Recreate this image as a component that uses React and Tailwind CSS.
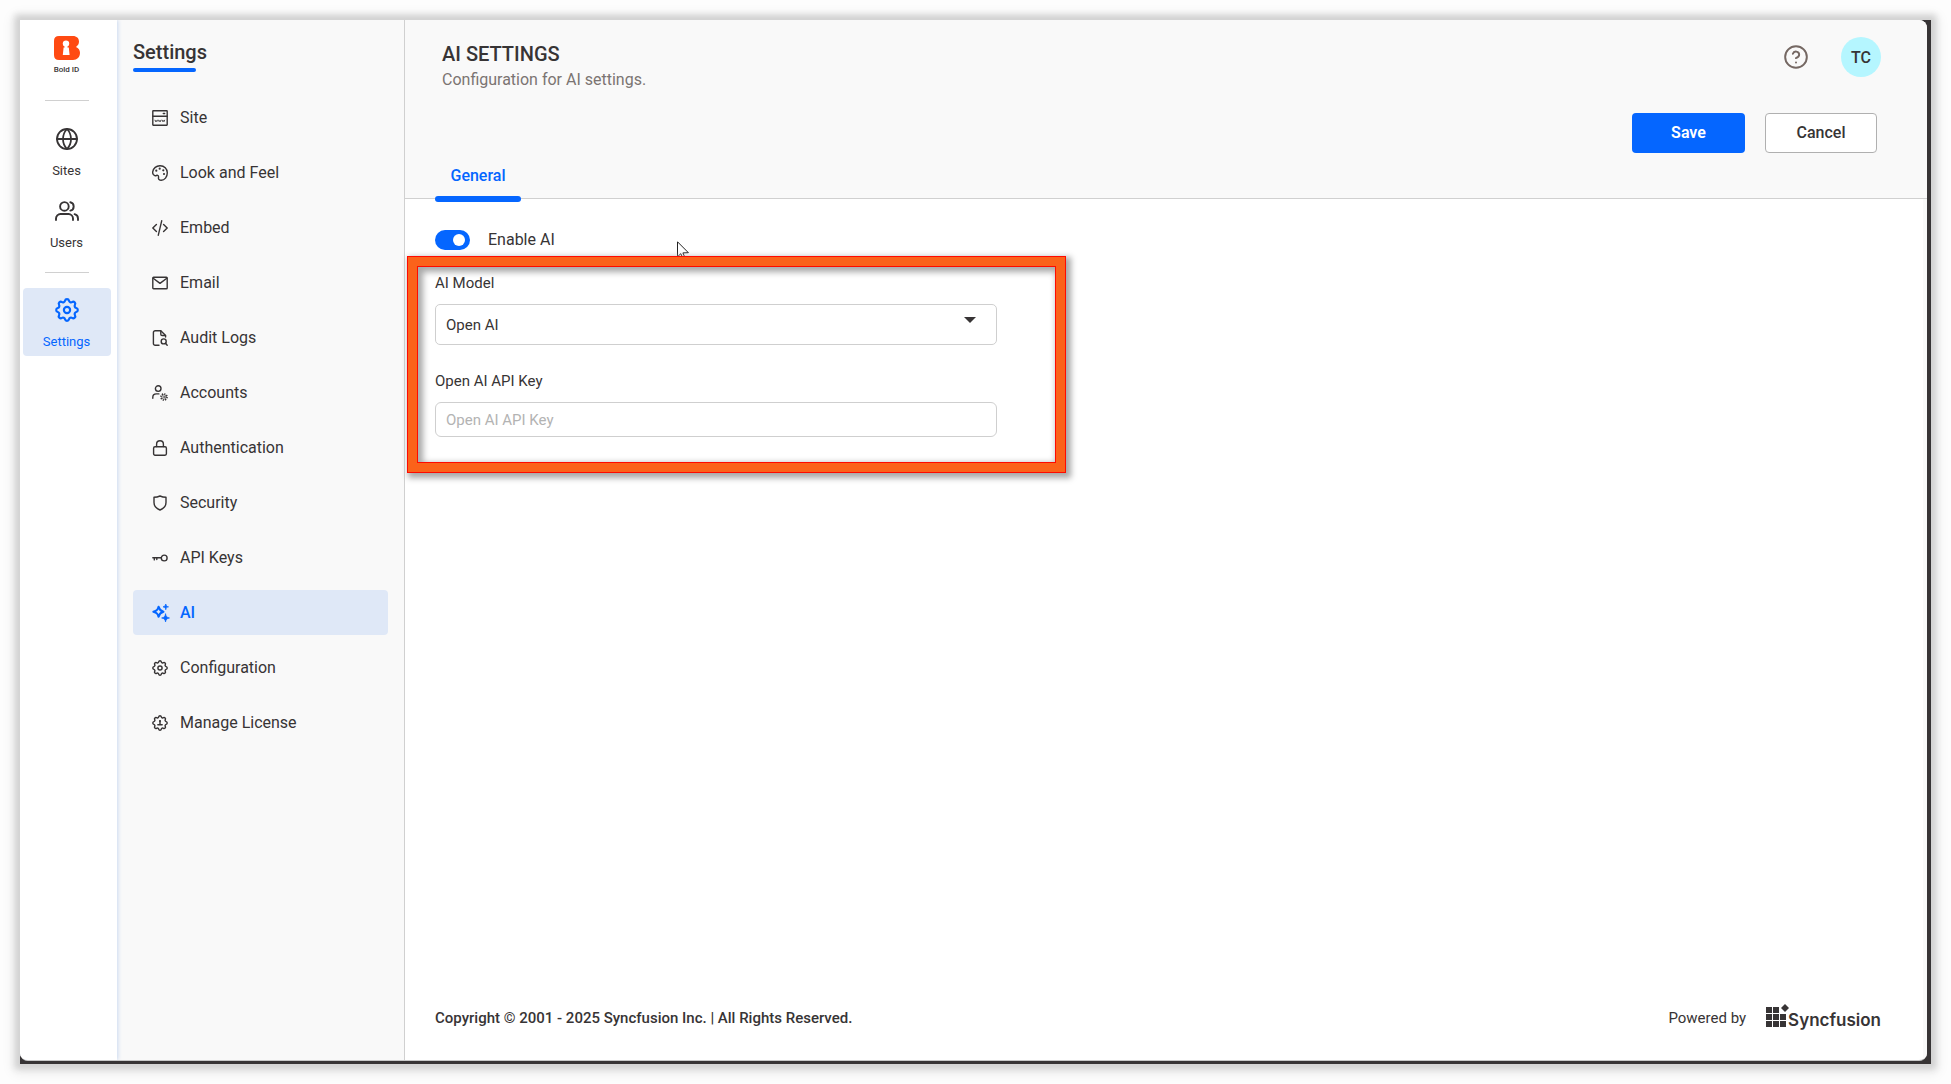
import { useState } from "react";
import { CircleHelp, Globe } from "lucide-react";

const GEAR_PATH =
  "M10.325 4.317c.426-1.756 2.924-1.756 3.35 0a1.724 1.724 0 0 0 2.573 1.066c1.543-.94 3.31.826 2.37 2.37a1.724 1.724 0 0 0 1.065 2.572c1.756.426 1.756 2.924 0 3.35a1.724 1.724 0 0 0-1.066 2.573c.94 1.543-.826 3.31-2.37 2.37a1.724 1.724 0 0 0-2.572 1.065c-.426 1.756-2.924 1.756-3.35 0a1.724 1.724 0 0 0-2.573-1.066c-1.543.94-3.31-.826-2.37-2.37a1.724 1.724 0 0 0-1.065-2.572c-1.756-.426-1.756-2.924 0-3.35a1.724 1.724 0 0 0 1.066-2.573c-.94-1.543.826-3.31 2.37-2.37a1.724 1.724 0 0 0 2.572-1.065Z";

const Icon = ({ children, className = "size-4", ...props }) => (
  <svg
    viewBox="0 0 16 16"
    fill="none"
    stroke="currentColor"
    strokeWidth="1.4"
    strokeLinecap="round"
    strokeLinejoin="round"
    className={`shrink-0 ${className}`}
    aria-hidden="true"
    {...props}
  >
    {children}
  </svg>
);

const GearIcon = ({ className, strokeWidth = 1.8, children }) => (
  <Icon className={className} viewBox="2 2 20 20" strokeWidth={strokeWidth}>
    <path d={GEAR_PATH} />
    {children || <circle cx="12" cy="12" r="2.6" />}
  </Icon>
);

const SiteIcon = () => (
  <Icon strokeLinejoin="miter">
    <rect x=".8" y=".8" width="14.4" height="14.4" rx=".4" />
    <path d="M.8 6.2h14.4" />
    <path d="M11.3 3.5h1.4" />
    <path d="m3 10.2.6 1.4.6-1 .6 1 .6-1.4m1.2 0 .6 1.4.6-1 .6 1 .6-1.4m1.2 0 .6 1.4.6-1 .6 1 .6-1.4" strokeWidth=".9" />
  </Icon>
);

const PaletteIcon = () => (
  <Icon>
    <path d="M.7 6.8C1.2 3.2 4.4.6 8.2.7c4 .1 7.1 3.2 7.1 7.1 0 4.3-2.7 7.500-6.100 7.500-1.900 0-3-1.100-2.700-2.600.2-1.100 0-2-.8-2.300-1-.4-1.500.5-2.600.3C1.400 10.400.5 8.700.7 6.800Z" />
    <g fill="currentColor" stroke="none">
      <circle cx="4.3" cy="5.7" r="1.1" />
      <circle cx="7.7" cy="3.7" r="1.1" />
      <circle cx="11.3" cy="5.3" r="1.1" />
      <circle cx="12" cy="9" r="1.1" />
    </g>
  </Icon>
);

const EmbedIcon = () => (
  <Icon>
    <path d="M4.4 4.4.8 8l3.6 3.6M11.6 4.4 15.2 8l-3.6 3.6M9.7.8 6.3 15.2" />
  </Icon>
);

const EmailIcon = () => (
  <Icon>
    <rect x=".8" y="2.3" width="14.4" height="11.4" rx=".8" />
    <path d="M1.2 3.2 8 8.4l6.800-5.200" />
  </Icon>
);

const AuditIcon = () => (
  <Icon>
    <path d="M7 15.3H3.2a1.8 1.8 0 0 1-1.800-1.800V2.500A1.800 1.800 0 0 1 3.200.7h5.600l4.800 4.800v1.600" />
    <path d="M8.8.9v3.300c0 .8.5 1.300 1.300 1.300h3.300" />
    <circle cx="11.7" cy="11.4" r="2.500" />
    <path d="m13.500 13.300 1.700 1.900" />
  </Icon>
);

const AccountsIcon = () => (
  <Icon>
    <circle cx="6.2" cy="3.6" r="2.8" />
    <path d="M.8 13.2v-.9c0-2 1.500-3.400 3.500-3.400h2.600" />
    <circle cx="12" cy="12" r="3.1" strokeDasharray="1.300 1.100" strokeWidth="1.5" strokeLinecap="butt" />
    <circle cx="12" cy="12" r="2.2" strokeWidth=".7" />
    <circle cx="12" cy="12" r=".7" strokeWidth=".6" />
  </Icon>
);

const LockIcon = () => (
  <Icon>
    <rect x="1.6" y="6.8" width="12.8" height="8.4" rx="1.4" />
    <path d="M4.6 6.6V4.2a3.4 3.4 0 0 1 6.8 0v2.4" />
  </Icon>
);

const ShieldIcon = () => (
  <Icon>
    <path d="M8 1c1.900.9 3.800 1.300 6 1.300v5.200c0 3.500-2.300 6-6 7.500-3.700-1.500-6-4-6-7.500V2.300C4.200 2.300 6.100 1.900 8 1Z" />
  </Icon>
);

const KeyIcon = () => (
  <Icon>
    <circle cx="12.2" cy="8" r="2.9" />
    <path d="M9.200 7.700H.8M2.300 7.900v2M4.800 7.900v1.600" />
  </Icon>
);

const SparkleIcon = () => (
  <Icon className="size-[18px]" viewBox="0 0 17 17">
    <path d="M6.200 2.600c.7 2.800 1.500 3.800 4.600 4.700-3.100.9-3.900 1.800-4.600 4.700-.7-2.900-1.500-3.800-4.900-4.700 3.400-.9 4.200-1.900 4.900-4.700Z" strokeWidth="2" />
    <path
      d="M13 0c.3 1.800.9 2.300 2.600 2.700-1.700.4-2.300.9-2.600 2.700-.3-1.800-.9-2.300-2.600-2.700C12.100 2.300 12.700 1.800 13 0ZM12.800 9.500c.5 2.400 1.200 3.200 3.700 3.700-2.500.5-3.200 1.300-3.700 3.700-.5-2.400-1.200-3.200-3.700-3.700 2.500-.5 3.200-1.300 3.700-3.700Z"
      fill="currentColor"
      strokeWidth=".7"
    />
  </Icon>
);

const LicenseIcon = () => (
  <GearIcon>
    <circle cx="12" cy="9.500" r="1.300" fill="currentColor" stroke="none" />
    <path d="M12 9.500v4.800M9.300 14.300h5.400" />
  </GearIcon>
);

const UsersIcon = () => (
  <Icon className="h-5 w-6" viewBox="0 0 24 20" strokeWidth="1.900">
    <circle cx="9.400" cy="5.400" r="4.300" />
    <path d="M1 19v-1.500A4.500 4.500 0 0 1 5.500 13h8a4.500 4.500 0 0 1 4.500 4.500V19M15.300 1.200a4.300 4.300 0 0 1 0 8.400M19.600 13.200c2 .5 3.400 2.200 3.400 4.300V19" />
  </Icon>
);

const BoldIdLogo = () => (
  <svg viewBox="0 0 26 24" className="h-6 w-[26px]" aria-hidden="true">
    <path
      d="M5 0h14c3.600 0 6 2.200 6 5.600 0 2.600-1.200 4.200-3 5.300 2.500 1 4 3 4 5.900 0 4.400-2.900 7.200-7 7.200H5c-3.300 0-5-1.700-5-5V5c0-3.300 1.700-5 5-5Z"
      fill="#ff4a12"
    />
    <circle cx="12" cy="7.600" r="3.200" fill="#fff" />
    <path d="M10.600 9.500h2.800v2h1.400l.8 7.500H8.800l.8-7.500h1Z" fill="#fff" />
  </svg>
);

const SyncfusionMark = () => (
  <svg viewBox="0 0 24 23" className="h-[23px] w-6" fill="#373435" aria-hidden="true">
    <path d="M0 3h6v6H0zM7 3h6v6H7zM0 10h6v6H0zM7 10h6v6H7zM14 10h6v6h-6zM0 17h6v6H0zM7 17h6v6H7zM14 17h6v6h-6zM19 0l4 4-4 4-4-4z" />
  </svg>
);

const menuItems = [
  { name: "Site", icon: SiteIcon },
  { name: "Look and Feel", icon: PaletteIcon },
  { name: "Embed", icon: EmbedIcon },
  { name: "Email", icon: EmailIcon },
  { name: "Audit Logs", icon: AuditIcon },
  { name: "Accounts", icon: AccountsIcon },
  { name: "Authentication", icon: LockIcon },
  { name: "Security", icon: ShieldIcon },
  { name: "API Keys", icon: KeyIcon },
  { name: "AI", icon: SparkleIcon, active: true },
  { name: "Configuration", icon: GearIcon },
  { name: "Manage License", icon: LicenseIcon },
];

const Rail = () => (
  <nav className="z-10 flex w-[97px] shrink-0 flex-col items-center bg-white pt-4 pr-1 text-[13px] leading-4 shadow-[1px_0_4px_#c9d8f0]">
    <a href="#home" className="flex flex-col items-center gap-1">
      <BoldIdLogo />
      <span className="text-[8px] leading-3 font-medium">Bold ID</span>
    </a>
    <hr className="mt-6 w-11 border-[#d0d0d0]" />
    <a href="#sites" className="mt-[26px] flex flex-col items-center gap-3">
      <Globe size={24} strokeWidth={1.8} />
      Sites
    </a>
    <a href="#users" className="mt-[22px] flex flex-col items-center gap-3.5">
      <UsersIcon />
      Users
    </a>
    <hr className="mt-[21px] w-11 border-[#d0d0d0]" />
    <a
      href="#settings"
      className="mt-[15px] flex h-[68px] w-[88px] flex-col items-center gap-3 rounded bg-[#dfe8f7] pt-2.5 text-[#0566ff]"
    >
      <GearIcon className="size-6" strokeWidth={1.8} />
      Settings
    </a>
  </nav>
);

const SettingsMenu = () => (
  <aside className="w-72 shrink-0 border-r border-[#d0d0d0] bg-[#f9f9f9] px-4 pt-5">
    <h2 className="text-xl leading-6 font-medium">Settings</h2>
    <div className="mt-1 h-1 w-[63px] rounded-full bg-[#0566ff]" />
    <ul className="mt-[23px] space-y-2.5">
      {menuItems.map(({ name, icon: ItemIcon, active }) => (
        <li key={name}>
          <a
            href={`#${name}`}
            className={`flex h-[45px] items-center rounded px-[19px] text-base ${
              active ? "bg-[#dfe8f7] font-medium text-[#0566ff]" : ""
            }`}
          >
            <span className="flex w-7">
              <ItemIcon />
            </span>
            {name}
          </a>
        </li>
      ))}
    </ul>
  </aside>
);

const PageHeader = () => (
  <header className="flex h-[179px] shrink-0 justify-between border-b border-[#d0d0d0] bg-[#f9f9f9] pr-[46px] pl-[30px]">
    <div className="flex flex-col justify-between">
      <div className="pt-[22px] pl-[7px]">
        <h1 className="text-xl leading-6 font-medium">AI SETTINGS</h1>
        <p className="mt-0.5 text-base leading-6 text-[#7b7472]">
          Configuration for AI settings.
        </p>
      </div>
      <button
        type="button"
        className="-mb-1 flex h-[38px] w-[86px] flex-col items-center justify-between text-base leading-6 font-medium text-[#0566ff]"
      >
        General
        <span className="h-1.5 w-full rounded-full bg-[#0566ff]" />
      </button>
    </div>
    <div className="pt-[17px]">
      <div className="flex items-center justify-end gap-8">
        <button type="button" aria-label="Help">
          <CircleHelp size={26} strokeWidth={1.8} className="text-[#756863]" />
        </button>
        <button
          type="button"
          className="size-10 rounded-full bg-[#b5f6ff] pt-0.5 text-base font-medium"
        >
          TC
        </button>
      </div>
      <div className="mt-9 flex gap-5 pr-1">
        <button
          type="button"
          className="h-10 w-[113px] rounded bg-[#0566ff] text-base font-semibold text-white"
        >
          Save
        </button>
        <button
          type="button"
          className="h-10 w-28 rounded border border-[#b0b0b0] bg-white text-base font-medium"
        >
          Cancel
        </button>
      </div>
    </div>
  </header>
);

const AiForm = () => {
  const [enabled, setEnabled] = useState(true);
  const [apiKey, setApiKey] = useState("");

  return (
    <form className="relative w-[562px] max-w-full text-[15px] leading-6">
      <label className="flex w-fit items-center gap-[18px] text-base leading-5">
        <input
          type="checkbox"
          checked={enabled}
          onChange={(e) => setEnabled(e.target.checked)}
          className="flex h-5 w-[35px] appearance-none items-center rounded-full bg-[#b0b0b0] px-[5px] before:size-3 before:rounded-full before:bg-white checked:justify-end checked:bg-[#0566ff]"
        />
        Enable AI
      </label>
      {/* pointer, tucked under the highlight frame */}
      <svg
        viewBox="0 0 13 20"
        className="absolute top-[11px] left-[242px] h-5 w-[13px]"
        aria-hidden="true"
      >
        <path
          d="M.5.8v15l3.300-3.100 2.200 5 2.100-.9-2.200-4.900 5.500-.2Z"
          fill="#fff"
          stroke="#222"
        />
      </svg>
      <div className="relative mt-[21px]">
        <label htmlFor="model" className="block">
          AI Model
        </label>
        <div className="relative mt-[9px]">
          <select
            id="model"
            className="block h-[41px] w-full appearance-none rounded-[5px] border border-[#cfcfcf] bg-white px-2.5"
          >
            <option>Open AI</option>
          </select>
          <svg
            viewBox="0 0 12 6"
            className="pointer-events-none absolute top-[13px] right-[21px] h-1.5 w-3"
            aria-hidden="true"
          >
            <path d="M0 0h12L6 6Z" fill="#373435" />
          </svg>
        </div>
        <label htmlFor="apiKey" className="mt-6 block">
          Open AI API Key
        </label>
        <input
          id="apiKey"
          type="text"
          placeholder="Open AI API Key"
          value={apiKey}
          onChange={(e) => setApiKey(e.target.value)}
          className="mt-[9px] block h-[35px] w-full rounded-md border border-[#cfcfcf] bg-white px-2.5 placeholder:text-[#b3b3b3]"
        />
        <div className="pointer-events-none absolute -top-[15px] -right-[69px] -bottom-9 -left-7 border border-[#ff0a00] shadow-[3px_3px_6px_2px_#a8a8a8]">
          <div className="h-full border-9 border-[#fb621a]">
            <div className="h-full border border-[#ff0a00] shadow-[inset_3px_3px_6px_2px_#a8a8a8]" />
          </div>
        </div>
      </div>
    </form>
  );
};

const Footer = () => (
  <footer className="mt-auto flex items-center justify-between pr-[42px] pb-7 text-[15px] leading-6">
    <p className="font-medium">
      Copyright © 2001 - 2025 Syncfusion Inc. | All Rights Reserved.
    </p>
    <div className="flex items-center gap-5">
      <span>Powered by</span>
      <a href="#syncfusion" className="flex items-start">
        <SyncfusionMark />
        <span className="-ml-0.5 pt-1.5 pb-0.5 font-['Inter'] text-[17px] leading-5 font-semibold">
          Syncfusion
        </span>
      </a>
    </div>
  </footer>
);

const App = () => {
  return (
    <div className="flex min-h-screen bg-[#fdfdfd] p-5 font-['Roboto','Liberation_Sans',sans-serif] text-[#373435]">
      <div className="flex grow bg-[#373435] pr-1 pb-[3px] shadow-[0_0_6px_5px_#d2d2d2,0_2px_12px_6px_#e8e8e8]">
        <div className="flex grow overflow-hidden rounded-r-lg rounded-bl-lg border-b border-[#c8c8c8] bg-white">
          <Rail />
          <SettingsMenu />
          <div className="flex min-w-0 grow flex-col">
            <PageHeader />
            <main className="flex grow flex-col border-r-4 border-[#f9f9f9] pt-[31px] pl-[30px]">
              <AiForm />
              <Footer />
            </main>
          </div>
        </div>
      </div>
    </div>
  );
};
export default App;
